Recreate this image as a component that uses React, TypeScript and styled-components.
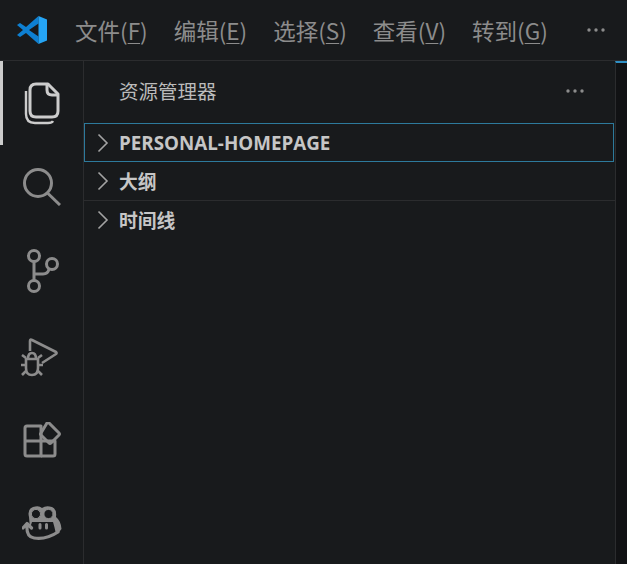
import { ReactNode } from 'react';
import styled, { createGlobalStyle } from 'styled-components';

const GlobalStyle = createGlobalStyle`
  html, body {
    margin: 0;
    padding: 0;
    background: #181a1c;
    overflow: hidden;
  }
  * {
    box-sizing: border-box;
  }
`;

const menus: { label: string; key: string }[] = [
  { label: '文件', key: 'F' },
  { label: '编辑', key: 'E' },
  { label: '选择', key: 'S' },
  { label: '查看', key: 'V' },
  { label: '转到', key: 'G' },
];

const sections = ['大纲', '时间线'];

const Logo = () => (
  <svg width="30" height="28" viewBox="0 0 30 28">
    <path d="M21.5 0 L9 11 L3 7 L0 9 L6 14 L0 19 L3 21 L9 17 L21.5 28 V20.5 L12 14 L21.5 7.5 Z" fill="#0e80d2" />
    <path d="M21.5 0 L30 3.5 V24.5 L21.5 28 Z" fill="#25a4f4" />
  </svg>
);

const Dots = () => (
  <svg width="18" height="4" viewBox="0 0 18 4" fill="currentColor">
    <circle cx="2" cy="2" r="1.7" />
    <circle cx="9" cy="2" r="1.7" />
    <circle cx="16" cy="2" r="1.7" />
  </svg>
);

const Chevron = () => (
  <svg width="12" height="20" viewBox="0 0 12 20" fill="none" stroke="#a3a3a3" strokeWidth="1.6">
    <path d="M1.5 1.5 L10 10 L1.5 18.5" />
  </svg>
);

const FilesIcon = () => (
  <svg width="36" height="43" viewBox="0 0 36 43" fill="none" stroke="currentColor" strokeWidth="3" strokeLinejoin="round">
    <path d="M6 8 Q6 2 12 2 H24 L34 12 V29 Q34 35 28 35 H12 Q6 35 6 29 Z" />
    <path d="M23 2 V8 Q23 13 28 13 H34" />
    <path d="M2 9 V32 Q2 41 11 41 H24 Q28 41 29 39" strokeWidth="2.4" />
  </svg>
);

const SearchIcon = () => (
  <svg width="38" height="38" viewBox="0 0 38 38" fill="none" stroke="currentColor" strokeWidth="3">
    <circle cx="15" cy="15" r="13.5" />
    <path d="M24.5 25 L37 37" />
  </svg>
);

const BranchIcon = () => (
  <svg width="32" height="44" viewBox="0 0 32 44" fill="none" stroke="currentColor" strokeWidth="3">
    <circle cx="7" cy="7" r="5.5" />
    <circle cx="25" cy="15" r="5.5" />
    <circle cx="7" cy="37" r="5.5" />
    <path d="M7 12.5 V31.5 M7 25 H16 Q21 25 22 20" />
  </svg>
);

const DebugIcon = () => (
  <svg width="38" height="40" viewBox="0 0 38 40" fill="none" stroke="currentColor" strokeWidth="2.6" strokeLinejoin="round">
    <path d="M10 13 V3 Q10 1 12 2 L36 14 Q37 15 36 16 L22 25" />
    <path d="M8 21 Q8 15 12 15 Q16 15 16 21" />
    <path d="M6 21 H18 V30 Q18 37 12 37 Q6 37 6 30 Z" />
    <path d="M6 20 L2 17 M18 20 L22 17 M6 27 H1 M18 27 H23 M6 33 L2 37 M18 33 L22 37" />
  </svg>
);

const ExtensionsIcon = () => (
  <svg width="38" height="38" viewBox="0 0 38 38" fill="none" stroke="currentColor" strokeWidth="3" strokeLinejoin="round">
    <path d="M4 4 H18 V34 H4 Q2 34 2 32 V6 Q2 4 4 4 Z" />
    <path d="M2 19 H32 V32 Q32 34 30 34 H18" />
    <path d="M26 1 L36 11 Q37 12 36 13 L28 21 Q27 22 26 21 L18 13 Q17 12 18 11 L24 1 Q25 0 26 1 Z" />
  </svg>
);

const CopilotIcon = () => (
  <svg width="40" height="36" viewBox="0 0 40 36" fill="none" stroke="currentColor" strokeLinecap="round" strokeLinejoin="round">
    <path d="M7 12 Q5 4 11 2 Q17 0 20 3 Q24 0 30 2 Q35 4 34 12 Q39 16 39.5 24 Q38 27 34 29 Q32 20 31 17 H10 L8 23 Z" fill="currentColor" stroke="none" />
    <circle cx="14" cy="9" r="4.6" fill="#181a1c" />
    <circle cx="26.5" cy="9" r="4.6" fill="#181a1c" />
    <path d="M18 19.5 V23 M24.5 19.5 V23" strokeWidth="3" />
    <path d="M1 23 L5 18.5 L9.5 23 M5 20 Q4 32 12 33 Q24 35 36 27" strokeWidth="3.2" />
  </svg>
);

const activityIcons: { icon: ReactNode; right: number; top: number }[] = [
  { icon: <FilesIcon />, right: 3, top: 0 },
  { icon: <SearchIcon />, right: 3, top: 0 },
  { icon: <BranchIcon />, right: 1, top: 0 },
  { icon: <DebugIcon />, right: 9, top: 6 },
  { icon: <ExtensionsIcon />, right: 3, top: 4 },
  { icon: <CopilotIcon />, right: 3, top: 0 },
];

export default function App() {
  return (
    <Window>
      <GlobalStyle />
      <TitleBar>
        <LogoSlot>
          <Logo />
        </LogoSlot>
        <MenuList>
          {menus.map((m) => (
            <MenuItem key={m.key}>
              {m.label}(<u>{m.key}</u>)
            </MenuItem>
          ))}
        </MenuList>
        <MoreSlot>
          <Dots />
        </MoreSlot>
      </TitleBar>
      <Body>
        <ActivityBar>
          {activityIcons.map((item, i) => (
            <ActivityItem key={i} $active={i === 0} $right={item.right} $top={item.top}>
              {item.icon}
            </ActivityItem>
          ))}
        </ActivityBar>
        <SideBar>
          <SideHeader>
            <SideTitle>资源管理器</SideTitle>
            <HeaderDots>
              <Dots />
            </HeaderDots>
          </SideHeader>
          <FocusedRow>
            <Chevron />
            <RowLabel>PERSONAL-HOMEPAGE</RowLabel>
          </FocusedRow>
          {sections.map((s, i) => (
            <Row key={s} $divider={i === 0}>
              <Chevron />
              <RowLabel>{s}</RowLabel>
            </Row>
          ))}
        </SideBar>
        <Editor />
      </Body>
    </Window>
  );
}

const Window = styled.div`
  width: 627px;
  height: 564px;
  display: flex;
  flex-direction: column;
  background: #181a1c;
  font-family: 'Open Sans', 'Noto Sans CJK SC', sans-serif;
`;

const TitleBar = styled.header`
  height: 61px;
  flex: none;
  display: flex;
  align-items: center;
  border-bottom: 1px solid #2b2c2e;
`;

const LogoSlot = styled.div`
  width: 75px;
  flex: none;
  padding-left: 17px;
  display: flex;
  align-items: center;
`;

const MenuList = styled.nav`
  display: flex;
  gap: 26px;
  height: 100%;
  align-items: center;
`;

const MenuItem = styled.span`
  font-size: 22.5px;
  line-height: 30px;
  color: #8c8c8c;
  white-space: nowrap;
  font-family: 'Noto Sans CJK SC', sans-serif;
  u {
    text-underline-offset: 3px;
    text-decoration-thickness: 1px;
  }
`;

const MoreSlot = styled.div`
  margin-left: auto;
  margin-right: 22px;
  display: flex;
  color: #8c8c8c;
`;

const Body = styled.div`
  flex: 1;
  display: flex;
  min-height: 0;
`;

const ActivityBar = styled.aside`
  width: 84px;
  flex: none;
  border-right: 1px solid #2b2c2e;
  display: flex;
  flex-direction: column;
`;

const ActivityItem = styled.div<{ $active?: boolean; $right: number; $top: number }>`
  height: 84px;
  flex: none;
  display: flex;
  align-items: center;
  justify-content: center;
  padding-right: ${(p) => p.$right}px;
  padding-top: ${(p) => p.$top}px;
  color: ${(p) => (p.$active ? '#cccccc' : '#8c8c8c')};
  border-left: 3px solid ${(p) => (p.$active ? '#cccccc' : 'transparent')};
`;

const SideBar = styled.section`
  flex: 1;
  min-width: 0;
  display: flex;
  flex-direction: column;
`;

const SideHeader = styled.div`
  height: 62px;
  flex: none;
  display: flex;
  align-items: center;
  padding: 0 31px 3px 35px;
  justify-content: space-between;
`;

const SideTitle = styled.span`
  font-size: 19.5px;
  color: #bbbbbb;
`;

const HeaderDots = styled.div`
  display: flex;
  color: #8c8c8c;
`;

const Row = styled.div<{ $divider?: boolean }>`
  height: 39px;
  flex: none;
  display: flex;
  align-items: center;
  gap: 10px;
  padding-left: 13px;
  border-bottom: 1px solid ${(p) => (p.$divider ? '#2b2c2e' : 'transparent')};
`;

const FocusedRow = styled(Row)`
  width: 530px;
  border: 1px solid #2d7a9c;
  padding-left: 12px;
`;

const RowLabel = styled.span`
  font-size: 18.8px;
  font-weight: 700;
  color: #c6c6c6;
`;

const Editor = styled.div`
  width: 12px;
  flex: none;
  background: #111214;
  border-left: 1px solid #2b2c2e;
  border-top: 2px solid #2f8fc4;
`;
